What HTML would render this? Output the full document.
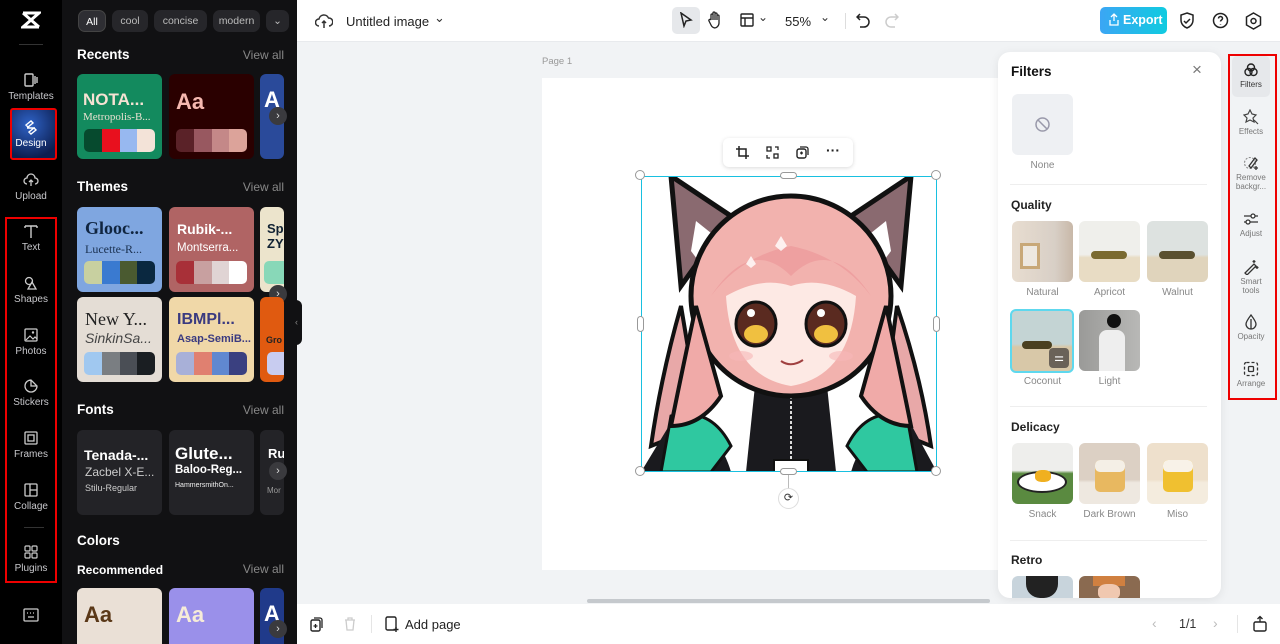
<!DOCTYPE html>
<html><head><meta charset="utf-8"><style>
*{box-sizing:border-box;margin:0;padding:0}
body{width:1280px;height:644px;overflow:hidden;font-family:"Liberation Sans",sans-serif;background:#f1f3f5;position:relative}
.abs{position:absolute}
#side{left:0;top:0;width:62px;height:644px;background:#000}
.si{position:absolute;left:0;width:62px;text-align:center;color:#c8c8cc;font-size:10px}
.si svg{display:block;margin:0 auto 3px}
#panel{left:62px;top:0;width:235px;height:644px;background:#111113;overflow:hidden}
.chip{position:absolute;top:10px;height:22px;border-radius:7px;background:#26262a;color:#bbb;font-size:10.5px;line-height:22px;text-align:center}
.h{position:absolute;left:15px;color:#fff;font-weight:bold;font-size:13.5px}
.va{position:absolute;right:13px;color:#888;font-size:12px}
.card{position:absolute;width:85px;height:85px;border-radius:6px;overflow:hidden}
.sw{position:absolute;left:7px;right:7px;height:23px;border-radius:5px;overflow:hidden;display:flex}
.sw i{flex:1}
.arr{position:absolute;width:18px;height:18px;border-radius:50%;background:#3a3a3e;color:#ddd;font-size:11px;line-height:18px;text-align:center}
#top{left:297px;top:0;width:983px;height:42px;background:#fff;border-bottom:1px solid #e8eaed}
#bot{left:297px;top:604px;width:983px;height:40px;background:#fff}
#filters{left:998px;top:52px;width:223px;height:546px;background:#fff;border-radius:12px;box-shadow:0 2px 10px rgba(0,0,0,.08);overflow:hidden}
.ft{position:absolute;width:61px;height:61px;border-radius:6px;overflow:hidden}
.fl{position:absolute;width:61px;text-align:center;font-size:10px;color:#888}
.fh{position:absolute;left:13px;font-size:12px;color:#222;font-weight:bold}
.rs{position:absolute;left:1232px;width:38px;text-align:center;font-size:8px;color:#777;line-height:9px}
.rs svg{display:block;margin:0 auto 2px}
.hd{position:absolute;width:10px;height:10px;border-radius:50%;background:#fff;border:1px solid #999}
</style></head><body>

<div id="side" class="abs">
 <svg class="abs" style="left:21px;top:11px" width="20" height="18" viewBox="0 0 20 18"><path d="M2 2h16L2 16h16M2 2l16 14" stroke="#fff" stroke-width="3" fill="none"/></svg>
 <div class="abs" style="left:19px;top:44px;width:24px;height:1px;background:#333"></div>
 <div class="si" style="top:72px"><svg width="16" height="16" viewBox="0 0 16 16"><rect x="2" y="2" width="8" height="12" rx="1" stroke="#ccc" fill="none" stroke-width="1.4"/><path d="M12 4v8M14 5v6" stroke="#ccc" stroke-width="1.4"/></svg>Templates</div>
 <div class="abs" style="left:10px;top:108px;width:47px;height:52px;border:2px solid #e00;background:radial-gradient(circle at 40% 30%,#2f63c7,#0c1e50 80%);border-radius:3px"></div>
 <div class="si" style="top:119px;color:#fff"><svg width="16" height="16" viewBox="0 0 16 16"><path d="M3 6l5-4 2 2-5 4zM6 13l5-4 2 2-5 4zM4 9l8 0" stroke="#fff" stroke-width="1.4" fill="none"/></svg>Design</div>
 <div class="si" style="top:172px"><svg width="16" height="16" viewBox="0 0 16 16"><path d="M4 12a3 3 0 010-6 4 4 0 018 0 3 3 0 010 6M8 8v6M6 10l2-2 2 2" stroke="#ccc" stroke-width="1.3" fill="none"/></svg>Upload</div>
 <div class="abs" style="left:5px;top:217px;width:52px;height:366px;border:2px solid #e00"></div>
 <div class="si" style="top:223px"><svg width="16" height="16" viewBox="0 0 16 16"><path d="M2 3h12M8 3v12M2 3v2M14 3v2" stroke="#ccc" stroke-width="1.4" fill="none"/></svg>Text</div>
 <div class="si" style="top:275px"><svg width="16" height="16" viewBox="0 0 16 16"><circle cx="6" cy="6" r="3.5" stroke="#ccc" fill="none" stroke-width="1.3"/><path d="M9 7l4 7H5z" stroke="#ccc" fill="none" stroke-width="1.3"/></svg>Shapes</div>
 <div class="si" style="top:327px"><svg width="16" height="16" viewBox="0 0 16 16"><rect x="2" y="2" width="12" height="12" rx="1" stroke="#ccc" fill="none" stroke-width="1.3"/><path d="M3 13l4-4 3 3 2-2 2 2" stroke="#ccc" fill="none" stroke-width="1.2"/><circle cx="10" cy="5.5" r="1.2" fill="#ccc"/></svg>Photos</div>
 <div class="si" style="top:378px"><svg width="16" height="16" viewBox="0 0 16 16"><path d="M8 2a6 6 0 106 6L8 2z M8 2v6h6" stroke="#ccc" fill="none" stroke-width="1.3"/></svg>Stickers</div>
 <div class="si" style="top:430px"><svg width="16" height="16" viewBox="0 0 16 16"><rect x="2" y="2" width="12" height="12" rx="1" stroke="#ccc" fill="none" stroke-width="1.3"/><rect x="5" y="5" width="6" height="6" stroke="#ccc" fill="none" stroke-width="1.3"/></svg>Frames</div>
 <div class="si" style="top:482px"><svg width="16" height="16" viewBox="0 0 16 16"><rect x="2" y="2" width="12" height="12" rx="1" stroke="#ccc" fill="none" stroke-width="1.3"/><path d="M7 2v12M7 8h7" stroke="#ccc" stroke-width="1.3"/></svg>Collage</div>
 <div class="abs" style="left:24px;top:527px;width:20px;height:1px;background:#333"></div>
 <div class="si" style="top:544px"><svg width="16" height="16" viewBox="0 0 16 16"><rect x="2" y="2" width="5" height="5" rx="1" stroke="#ccc" fill="none" stroke-width="1.2"/><rect x="9" y="2" width="5" height="5" rx="1" stroke="#ccc" fill="none" stroke-width="1.2"/><rect x="2" y="9" width="5" height="5" rx="1" stroke="#ccc" fill="none" stroke-width="1.2"/><rect x="9" y="9" width="5" height="5" rx="1" stroke="#ccc" fill="none" stroke-width="1.2"/></svg>Plugins</div>
 <svg class="abs" style="left:23px;top:608px" width="16" height="14" viewBox="0 0 16 14"><rect x="1" y="1" width="14" height="12" rx="1" stroke="#ccc" fill="none" stroke-width="1.3"/><path d="M4 5h1M7 5h1M10 5h1M5 9h6" stroke="#ccc" stroke-width="1.3"/></svg>
</div>

<div id="panel" class="abs">
 <div class="chip" style="left:16px;width:28px;background:#2e2e33;color:#fff;border:1px solid #444">All</div>
 <div class="chip" style="left:50px;width:36px">cool</div>
 <div class="chip" style="left:92px;width:53px">concise</div>
 <div class="chip" style="left:151px;width:47px;overflow:hidden">modern</div>
 <div class="chip" style="left:204px;width:23px">⌄</div>

 <div class="h" style="top:47px">Recents</div><div class="va" style="top:48px">View all</div>
 <div class="card" style="left:15px;top:74px;background:#138a5e"><div class="abs" style="left:6px;top:16px;color:#f6e2d3;font-weight:900;font-size:17px">NOTA...</div><div class="abs" style="left:6px;top:37px;color:#e8e0d0;font-family:'Liberation Serif',serif;font-size:11px">Metropolis-B...</div><div class="sw" style="top:55px"><i style="background:#064a2e"></i><i style="background:#e8101e"></i><i style="background:#97b8f0"></i><i style="background:#f3e3d8"></i></div></div>
 <div class="card" style="left:107px;top:74px;background:#2a0000"><div class="abs" style="left:7px;top:15px;color:#f5b8b0;font-weight:bold;font-size:22px">Aa</div><div class="sw" style="top:55px"><i style="background:#5a2228"></i><i style="background:#985860"></i><i style="background:#c48888"></i><i style="background:#dca39a"></i></div></div>
 <div class="card" style="left:198px;top:74px;width:24px;background:#2a4a9a"><div class="abs" style="left:4px;top:13px;color:#fff;font-weight:bold;font-size:22px">A</div></div>
 <div class="arr" style="left:207px;top:107px">›</div>

 <div class="h" style="top:179px">Themes</div><div class="va" style="top:180px">View all</div>
 <div class="card" style="left:15px;top:207px;background:#7fa6e0"><div class="abs" style="left:8px;top:11px;color:#102540;font-family:'Liberation Serif',serif;font-weight:bold;font-size:18px">Glooc...</div><div class="abs" style="left:8px;top:35px;color:#1a3050;font-family:'Liberation Serif',serif;font-size:12px">Lucette-R...</div><div class="sw" style="top:54px"><i style="background:#c8d0a0"></i><i style="background:#3a7ad0"></i><i style="background:#4a5a30"></i><i style="background:#0a2840"></i></div></div>
 <div class="card" style="left:107px;top:207px;background:#b06464"><div class="abs" style="left:8px;top:14px;color:#fff;font-weight:bold;font-size:14px">Rubik-...</div><div class="abs" style="left:8px;top:35px;color:#fff;font-size:11.5px">Montserra...</div><div class="sw" style="top:54px"><i style="background:#a83038"></i><i style="background:#c8a0a0"></i><i style="background:#e0d4d4"></i><i style="background:#fff"></i></div></div>
 <div class="card" style="left:198px;top:207px;width:24px;background:#ece4cc"><div class="abs" style="left:7px;top:14px;color:#123;font-weight:bold;font-size:13px">Sp<br>ZY</div><div class="abs" style="left:4px;top:54px;width:20px;height:23px;background:#88d8b8;border-radius:5px 0 0 5px"></div></div>
 <div class="arr" style="left:207px;top:285px">›</div>
 <div class="card" style="left:15px;top:297px;background:#e4ddd5"><div class="abs" style="left:8px;top:12px;color:#222;font-family:'Liberation Serif',serif;font-size:18px">New Y...</div><div class="abs" style="left:8px;top:33px;color:#444;font-style:italic;font-size:14px">SinkinSa...</div><div class="sw" style="top:55px"><i style="background:#a0c8f0"></i><i style="background:#7a7e82"></i><i style="background:#4a4e55"></i><i style="background:#1a1e22"></i></div></div>
 <div class="card" style="left:107px;top:297px;background:#f0d8a8"><div class="abs" style="left:8px;top:14px;color:#3a3a80;font-weight:bold;font-size:16px">IBMPl...</div><div class="abs" style="left:8px;top:36px;color:#3a3a80;font-weight:bold;font-size:11px">Asap-SemiB...</div><div class="sw" style="top:55px"><i style="background:#a8b0d8"></i><i style="background:#e08070"></i><i style="background:#6088d0"></i><i style="background:#3a4080"></i></div></div>
 <div class="card" style="left:198px;top:297px;width:24px;background:#e05a10"><div class="abs" style="left:6px;top:38px;color:#222;font-weight:bold;font-size:9px">Gro</div><div class="abs" style="left:7px;top:55px;width:17px;height:23px;background:#c8ccf0;border-radius:5px 0 0 5px"></div></div>

 <div class="h" style="top:402px">Fonts</div><div class="va" style="top:403px">View all</div>
 <div class="card" style="left:15px;top:430px;background:#232327"><div class="abs" style="left:7px;top:17px;color:#fff;font-weight:900;font-size:14px">Tenada-...</div><div class="abs" style="left:8px;top:35px;color:#ccc;font-size:12px">Zacbel X-E...</div><div class="abs" style="left:8px;top:53px;color:#ccc;font-size:9px">Stilu-Regular</div></div>
 <div class="card" style="left:107px;top:430px;background:#232327"><div class="abs" style="left:6px;top:14px;color:#fff;font-weight:900;font-size:17px">Glute...</div><div class="abs" style="left:6px;top:34px;color:#fff;font-weight:bold;font-size:11.5px">Baloo-Reg...</div><div class="abs" style="left:6px;top:52px;color:#eee;font-size:7px">HammersmithOn...</div></div>
 <div class="card" style="left:198px;top:430px;width:24px;background:#232327"><div class="abs" style="left:8px;top:16px;color:#fff;font-weight:bold;font-size:13px">Ru</div><div class="abs" style="left:7px;top:56px;color:#999;font-size:8px">Mor</div></div>
 <div class="arr" style="left:207px;top:462px">›</div>

 <div class="h" style="top:533px">Colors</div>
 <div class="abs" style="left:15px;top:563px;color:#fff;font-size:12px;font-weight:bold">Recommended</div><div class="va" style="top:562px">View all</div>
 <div class="card" style="left:15px;top:588px;background:#eae0d6"><div class="abs" style="left:7px;top:14px;color:#5a3818;font-weight:bold;font-size:22px">Aa</div></div>
 <div class="card" style="left:107px;top:588px;background:#9a90ea"><div class="abs" style="left:7px;top:14px;color:#f6ecd8;font-weight:bold;font-size:22px">Aa</div></div>
 <div class="card" style="left:198px;top:588px;width:24px;background:#203a8a"><div class="abs" style="left:4px;top:13px;color:#fff;font-weight:bold;font-size:22px">A</div></div>
 <div class="arr" style="left:207px;top:620px">›</div>
</div>
<div class="abs" style="left:295px;top:300px;width:7px;height:45px;background:#111113;border-radius:0 6px 6px 0;color:#888;font-size:9px;line-height:45px">‹</div>

<div id="top" class="abs">
 <svg class="abs" style="left:18px;top:13px" width="18" height="16" viewBox="0 0 18 16"><path d="M4 13a3.5 3.5 0 010-7 5 5 0 019.5-1A3.5 3.5 0 0114 13M9 8v7M7 10l2-2 2 2" stroke="#333" stroke-width="1.5" fill="none"/></svg>
 <div class="abs" style="left:49px;top:14px;font-size:13px;color:#222">Untitled image</div>
 <div class="abs" style="left:137px;top:10px;font-size:13px;color:#333">⌄</div>
 <div class="abs" style="left:375px;top:7px;width:28px;height:27px;background:#e6e8eb;border-radius:5px"></div>
 <svg class="abs" style="left:382px;top:12px" width="14" height="16" viewBox="0 0 14 16"><path d="M2 1l10 7-5 1-2 5z" stroke="#222" stroke-width="1.5" fill="none"/></svg>
 <svg class="abs" style="left:411px;top:11px" width="14" height="18" viewBox="0 0 14 18"><path d="M3 9V4a1 1 0 012 0v5V2a1 1 0 012 0v7V3a1 1 0 012 0v6-4a1 1 0 012 0v7a5 5 0 01-5 5H7a5 5 0 01-4-3L1 10a1 1 0 012-1z" stroke="#222" stroke-width="1.3" fill="none"/></svg>
 <svg class="abs" style="left:443px;top:13px" width="14" height="14" viewBox="0 0 14 14"><rect x="1" y="1" width="12" height="12" rx="1" stroke="#222" stroke-width="1.4" fill="none"/><path d="M1 5h12M5 5v8" stroke="#222" stroke-width="1.4"/></svg>
 <div class="abs" style="left:461px;top:10px;font-size:12px;color:#333">⌄</div>
 <div class="abs" style="left:488px;top:14px;font-size:13px;color:#222">55%</div>
 <div class="abs" style="left:523px;top:10px;font-size:12px;color:#333">⌄</div>
 <div class="abs" style="left:548px;top:13px;width:1px;height:16px;background:#ddd"></div>
 <svg class="abs" style="left:559px;top:13px" width="14" height="15" viewBox="0 0 14 15"><path d="M4 1L1 4l3 3M1 4h7a5 5 0 010 10H4" stroke="#222" stroke-width="1.5" fill="none"/></svg>
 <svg class="abs" style="left:588px;top:13px" width="14" height="15" viewBox="0 0 14 15"><path d="M10 1l3 3-3 3M13 4H6a5 5 0 000 10h4" stroke="#ccc" stroke-width="1.5" fill="none"/></svg>
 <div class="abs" style="left:803px;top:7px;width:67px;height:27px;border-radius:5px;background:linear-gradient(90deg,#3ba6f4,#10cbe0);color:#fff;font-size:12.5px;font-weight:bold;line-height:27px;padding-left:23px">Export</div>
 <svg class="abs" style="left:812px;top:13px" width="10" height="13" viewBox="0 0 10 13"><path d="M5 8V1M2 4l3-3 3 3M1 7v5h8V7" stroke="#fff" stroke-width="1.3" fill="none"/></svg>
 <svg class="abs" style="left:882px;top:12px" width="16" height="18" viewBox="0 0 16 18"><path d="M8 1l6 2v5c0 4-3 7-6 8-3-1-6-4-6-8V3z M5 9l2 2 4-4" stroke="#222" stroke-width="1.5" fill="none"/></svg>
 <svg class="abs" style="left:915px;top:12px" width="17" height="17" viewBox="0 0 17 17"><circle cx="8.5" cy="8.5" r="7" stroke="#222" stroke-width="1.5" fill="none"/><path d="M6.5 6.5a2 2 0 114 0c0 1.5-2 1.5-2 3M8.5 12v.5" stroke="#222" stroke-width="1.5" fill="none"/></svg>
 <svg class="abs" style="left:948px;top:12px" width="17" height="18" viewBox="0 0 17 18"><path d="M8.5 1l7 4v8l-7 4-7-4V5z" stroke="#222" stroke-width="1.5" fill="none"/><circle cx="8.5" cy="9" r="2.5" stroke="#222" stroke-width="1.5" fill="none"/></svg>
</div>

<div class="abs" style="left:542px;top:56px;font-size:9.5px;color:#999">Page 1</div>
<div class="abs" style="left:542px;top:78px;width:458px;height:492px;background:#fff"></div>

<div class="abs" style="left:641px;top:176px;width:296px;height:296px;overflow:hidden;background:#fff">
<svg width="296" height="296" viewBox="0 0 296 296">
 <path d="M40 130 Q20 200 10 270 L60 250 Z" fill="#e8a8a8" stroke="#111" stroke-width="4"/>
 <path d="M256 130 Q280 200 290 270 L240 250 Z" fill="#e8a8a8" stroke="#111" stroke-width="4"/>
 <path d="M40 230 Q80 260 90 296 H210 Q220 260 260 230 L296 296 H0z" fill="#1a1a1e"/>
 <path d="M30 240 Q70 230 90 270 L70 296 H20z M266 240 Q226 230 206 270 L226 296 H276z" fill="#2fc8a0" stroke="#111" stroke-width="3"/>
 <path d="M115 200 H185 L195 296 H105z" fill="#1a1a1e"/>
 <path d="M150 215 V290" stroke="#ddd" stroke-width="2" stroke-dasharray="3 2"/>
 <rect x="133" y="284" width="34" height="14" fill="#fff" stroke="#111" stroke-width="2"/>
 <path d="M30 0 L90 40 L40 110 Z" fill="#8a6a70" stroke="#111" stroke-width="5"/>
 <path d="M270 0 L210 40 L260 110 Z" fill="#8a6a70" stroke="#111" stroke-width="5"/>
 <path d="M55 45 L80 65 L65 95 L50 75Z M245 45 L220 65 L235 95 L250 75Z" fill="#fff"/>
 <ellipse cx="150" cy="120" rx="100" ry="100" fill="#f2b2ae" stroke="#111" stroke-width="5"/>
 <path d="M55 130 Q40 200 30 250 Q60 250 80 220 Z M245 130 Q260 200 270 250 Q240 250 220 220 Z" fill="#f0aaa8" stroke="#111" stroke-width="4"/>
 <path d="M85 120 Q90 200 150 210 Q210 200 215 120 Q180 100 150 110 Q120 100 85 120Z" fill="#fde9e4"/>
 <path d="M70 120 Q110 60 150 100 Q190 60 230 120 Q200 80 150 70 Q100 80 70 120Z" fill="#eea0a0"/>
 <ellipse cx="115" cy="148" rx="20" ry="22" fill="#5a2a20" stroke="#111" stroke-width="3"/>
 <ellipse cx="185" cy="148" rx="20" ry="22" fill="#5a2a20" stroke="#111" stroke-width="3"/>
 <ellipse cx="115" cy="158" rx="12" ry="9" fill="#f0c040"/>
 <ellipse cx="185" cy="158" rx="12" ry="9" fill="#f0c040"/>
 <circle cx="110" cy="137" r="4" fill="#fff"/><circle cx="180" cy="137" r="4" fill="#fff"/>
 <path d="M140 185 Q150 192 162 184" stroke="#a04040" stroke-width="2" fill="none"/>
 <ellipse cx="100" cy="180" rx="12" ry="5" fill="#f6b8b8" opacity=".6"/><ellipse cx="200" cy="180" rx="12" ry="5" fill="#f6b8b8" opacity=".6"/>
 <path d="M140 60 l6 10 -6 5 -6 -5z M110 80 l5 8 -5 4 -5-4z" fill="#fff" opacity=".8"/>
</svg></div>
<div class="abs" style="left:641px;top:176px;width:296px;height:296px;border:1.5px solid #18c0e0"></div>
<div class="hd" style="left:635px;top:170px"></div><div class="hd" style="left:931px;top:170px"></div>
<div class="hd" style="left:635px;top:466px"></div><div class="hd" style="left:931px;top:466px"></div>
<div class="abs" style="left:780px;top:172px;width:17px;height:7px;border-radius:4px;background:#fff;border:1px solid #999"></div>
<div class="abs" style="left:780px;top:468px;width:17px;height:7px;border-radius:4px;background:#fff;border:1px solid #999"></div>
<div class="abs" style="left:637px;top:316px;width:7px;height:16px;border-radius:4px;background:#fff;border:1px solid #999"></div>
<div class="abs" style="left:933px;top:316px;width:7px;height:16px;border-radius:4px;background:#fff;border:1px solid #999"></div>
<div class="abs" style="left:788px;top:475px;width:1px;height:14px;background:#bbb"></div>
<div class="abs" style="left:778px;top:488px;width:21px;height:21px;border-radius:50%;background:#fff;border:1px solid #ddd;text-align:center;font-size:11px;line-height:19px;color:#333">⟳</div>
<div class="abs" style="left:723px;top:138px;width:130px;height:29px;background:#fff;border-radius:6px;box-shadow:0 1px 4px rgba(0,0,0,.15)">
 <svg class="abs" style="left:13px;top:8px" width="13" height="13" viewBox="0 0 13 13"><path d="M3 0v10h10M0 3h10v10" stroke="#222" stroke-width="1.5" fill="none"/></svg>
 <svg class="abs" style="left:43px;top:8px" width="13" height="13" viewBox="0 0 13 13"><rect x="1" y="1" width="4" height="4" stroke="#222" fill="none" stroke-width="1.3"/><rect x="8" y="8" width="4" height="4" stroke="#222" fill="none" stroke-width="1.3"/><path d="M9 1h3v3M1 9v3h3" stroke="#222" stroke-width="1.3" fill="none"/></svg>
 <svg class="abs" style="left:73px;top:8px" width="13" height="13" viewBox="0 0 13 13"><rect x="1" y="3" width="9" height="9" rx="2" stroke="#222" fill="none" stroke-width="1.4"/><path d="M4 1h6a2 2 0 012 2v6M5.5 5.5v3M4 7h3" stroke="#222" stroke-width="1.3" fill="none"/></svg>
 <div class="abs" style="left:103px;top:4px;font-size:14px;color:#222;font-weight:bold">···</div>
</div>
<div class="abs" style="left:587px;top:599px;width:403px;height:4px;border-radius:2px;background:#c5c9cd"></div>

<div id="filters" class="abs">
 <div class="abs" style="left:13px;top:12px;font-size:13.5px;font-weight:bold;color:#111">Filters</div>
 <div class="abs" style="left:194px;top:8px;font-size:17px;color:#777">×</div>
 <div class="ft" style="left:14px;top:42px;background:#eef0f3"><svg class="abs" style="left:22px;top:22px" width="17" height="17" viewBox="0 0 17 17"><circle cx="8.5" cy="8.5" r="6.5" stroke="#99a" stroke-width="1.5" fill="none"/><path d="M4 4l9 9" stroke="#99a" stroke-width="1.5"/></svg></div>
 <div class="fl" style="left:14px;top:108px">None</div>
 <div class="abs" style="left:12px;top:132px;width:197px;height:1px;background:#eee"></div>
 <div class="fh" style="top:146px">Quality</div>
 <div class="ft" style="left:14px;top:169px;background:linear-gradient(90deg,#e8ddd0,#d8cfc6 70%,#c8b8a8)"><div class="abs" style="left:8px;top:22px;width:20px;height:26px;border:3px solid #c8a878;background:#ede8e0"></div></div>
 <div class="ft" style="left:81px;top:169px;background:linear-gradient(#efefeb 55%,#e8dcc4 60%)"><div class="abs" style="left:12px;top:30px;width:36px;height:8px;background:#7a6a30;border-radius:4px"></div></div>
 <div class="ft" style="left:149px;top:169px;background:linear-gradient(#dde2e0 55%,#e0d4bc 60%)"><div class="abs" style="left:12px;top:30px;width:36px;height:8px;background:#5a5030;border-radius:4px"></div></div>
 <div class="fl" style="left:14px;top:235px">Natural</div><div class="fl" style="left:81px;top:235px">Apricot</div><div class="fl" style="left:149px;top:235px">Walnut</div>
 <div class="ft" style="left:12px;top:257px;width:64px;height:64px;border:2px solid #5ed8ee;background:linear-gradient(#c4d4d4 55%,#d8c8a8 60%)"><div class="abs" style="left:10px;top:30px;width:30px;height:8px;background:#4a4020;border-radius:4px"></div><div class="abs" style="left:37px;top:37px;width:20px;height:20px;border-radius:4px;background:#6a6258;color:#fff;font-size:11px;text-align:center;line-height:20px">⚌</div></div>
 <div class="ft" style="left:81px;top:258px;background:linear-gradient(90deg,#9a9a98,#b8b8b6)"><div class="abs" style="left:28px;top:4px;width:14px;height:14px;border-radius:50%;background:#111"></div><div class="abs" style="left:20px;top:20px;width:26px;height:41px;border-radius:8px 8px 0 0;background:#eee"></div></div>
 <div class="fl" style="left:14px;top:324px">Coconut</div><div class="fl" style="left:81px;top:324px">Light</div>
 <div class="abs" style="left:12px;top:354px;width:197px;height:1px;background:#eee"></div>
 <div class="fh" style="top:368px">Delicacy</div>
 <div class="ft" style="left:14px;top:391px;background:linear-gradient(#eeeeec 45%,#5a8a40 50%)"><div class="abs" style="left:5px;top:28px;width:50px;height:22px;border-radius:50%;background:#fff;border:2px solid #222"></div><div class="abs" style="left:23px;top:27px;width:16px;height:12px;border-radius:40%;background:#f0b020"></div></div>
 <div class="ft" style="left:81px;top:391px;background:linear-gradient(#dcd0c4 60%,#eee8e0 65%)"><div class="abs" style="left:16px;top:17px;width:30px;height:32px;border-radius:5px;background:#e8b860"></div><div class="abs" style="left:16px;top:17px;width:30px;height:12px;border-radius:5px;background:#f4efe6"></div></div>
 <div class="ft" style="left:149px;top:391px;background:linear-gradient(#eee0cc 60%,#f4ecde 65%)"><div class="abs" style="left:16px;top:17px;width:30px;height:32px;border-radius:5px;background:#f0c030"></div><div class="abs" style="left:16px;top:17px;width:30px;height:12px;border-radius:5px;background:#f8f2e8"></div></div>
 <div class="fl" style="left:14px;top:457px">Snack</div><div class="fl" style="left:81px;top:457px">Dark Brown</div><div class="fl" style="left:149px;top:457px">Miso</div>
 <div class="abs" style="left:12px;top:488px;width:197px;height:1px;background:#eee"></div>
 <div class="fh" style="top:501px">Retro</div>
 <div class="ft" style="left:14px;top:524px;background:#c8d4dc"><div class="abs" style="left:14px;top:0;width:32px;height:22px;border-radius:0 0 14px 14px;background:#222"></div></div>
 <div class="ft" style="left:81px;top:524px;background:#8a6a50"><div class="abs" style="left:14px;top:0;width:32px;height:10px;background:#d08040"></div><div class="abs" style="left:19px;top:8px;width:22px;height:16px;background:#f0c8b0;border-radius:40%"></div></div>
</div>

<div class="abs" style="left:1228px;top:54px;width:49px;height:346px;border:2px solid #e00"></div>
<div class="abs" style="left:1232px;top:56px;width:38px;height:41px;background:#e6e8eb;border-radius:5px"></div>
<div class="rs" style="top:62px;color:#333"><svg width="16" height="16" viewBox="0 0 16 16"><circle cx="8" cy="5.5" r="3.5" stroke="#222" fill="none" stroke-width="1.4"/><circle cx="5.5" cy="10" r="3.5" stroke="#222" fill="none" stroke-width="1.4"/><circle cx="10.5" cy="10" r="3.5" stroke="#222" fill="none" stroke-width="1.4"/></svg>Filters</div>
<div class="rs" style="top:109px"><svg width="16" height="16" viewBox="0 0 16 16"><path d="M7 1l2 4 4 1-3 3 1 4-4-2-4 2 1-4-3-3 4-1z M11 11l4 4" stroke="#444" fill="none" stroke-width="1.2"/></svg>Effects</div>
<div class="rs" style="top:155px"><svg width="16" height="16" viewBox="0 0 16 16"><circle cx="7" cy="8" r="5.5" stroke="#888" fill="none" stroke-width="1.1" stroke-dasharray="2 1.5"/><path d="M6 11l6-8 2 2-6 8z M13 11v4M11 13h4" stroke="#333" fill="none" stroke-width="1.3"/></svg>Remove<br>backgr...</div>
<div class="rs" style="top:211px"><svg width="16" height="16" viewBox="0 0 16 16"><path d="M1 5h14M1 11h14" stroke="#333" stroke-width="1.3"/><circle cx="10" cy="5" r="2" fill="#fff" stroke="#333" stroke-width="1.3"/><circle cx="5" cy="11" r="2" fill="#fff" stroke="#333" stroke-width="1.3"/></svg>Adjust</div>
<div class="rs" style="top:259px"><svg width="16" height="16" viewBox="0 0 16 16"><path d="M2 14l9-9 2 2-9 9z M11 1v3M9.5 2.5h3M14 7v3M12.5 8.5h3" stroke="#333" fill="none" stroke-width="1.3"/></svg>Smart<br>tools</div>
<div class="rs" style="top:314px"><svg width="16" height="16" viewBox="0 0 16 16"><path d="M8 1C5 5 3 8 3 10a5 5 0 0010 0c0-2-2-5-5-9z M8 5v10" stroke="#333" fill="none" stroke-width="1.3"/></svg>Opacity</div>
<div class="rs" style="top:361px"><svg width="16" height="16" viewBox="0 0 16 16"><rect x="1.5" y="1.5" width="13" height="13" rx="2" stroke="#333" fill="none" stroke-width="1.3" stroke-dasharray="3 2"/><rect x="5.5" y="5.5" width="5" height="5" rx="1" stroke="#333" fill="none" stroke-width="1.3"/></svg>Arrange</div>

<div id="bot" class="abs">
 <svg class="abs" style="left:13px;top:13px" width="13" height="15" viewBox="0 0 13 15"><rect x="1" y="3" width="9" height="11" rx="1.5" stroke="#222" fill="none" stroke-width="1.4"/><path d="M4 1h6a2 2 0 012 2v8M5.5 7v4M3.5 9h4" stroke="#222" stroke-width="1.3" fill="none"/></svg>
 <svg class="abs" style="left:47px;top:13px" width="12" height="14" viewBox="0 0 12 14"><path d="M1 3h10M4 3V1h4v2M2 3l1 10h6l1-10" stroke="#ccc" stroke-width="1.3" fill="none"/></svg>
 <div class="abs" style="left:74px;top:11px;width:1px;height:18px;background:#e5e5e5"></div>
 <svg class="abs" style="left:88px;top:12px" width="14" height="17" viewBox="0 0 14 17"><rect x="1" y="1" width="10" height="13" rx="1.5" stroke="#222" fill="none" stroke-width="1.4"/><path d="M11 11v5M8.5 13.5h5" stroke="#222" stroke-width="1.4"/></svg>
 <div class="abs" style="left:108px;top:13px;font-size:13px;color:#222">Add page</div>
 <div class="abs" style="left:855px;top:11px;font-size:14px;color:#bbb">‹</div>
 <div class="abs" style="left:882px;top:13px;font-size:12.5px;color:#333">1/1</div>
 <div class="abs" style="left:916px;top:11px;font-size:14px;color:#bbb">›</div>
 <div class="abs" style="left:940px;top:11px;width:1px;height:18px;background:#e5e5e5"></div>
 <svg class="abs" style="left:956px;top:11px" width="14" height="17" viewBox="0 0 14 17"><rect x="1" y="7" width="12" height="9" rx="1.5" stroke="#222" fill="none" stroke-width="1.4"/><path d="M4.5 4L7 1.5 9.5 4M7 2v5" stroke="#222" stroke-width="1.3" fill="none"/></svg>
</div>
</body></html>
